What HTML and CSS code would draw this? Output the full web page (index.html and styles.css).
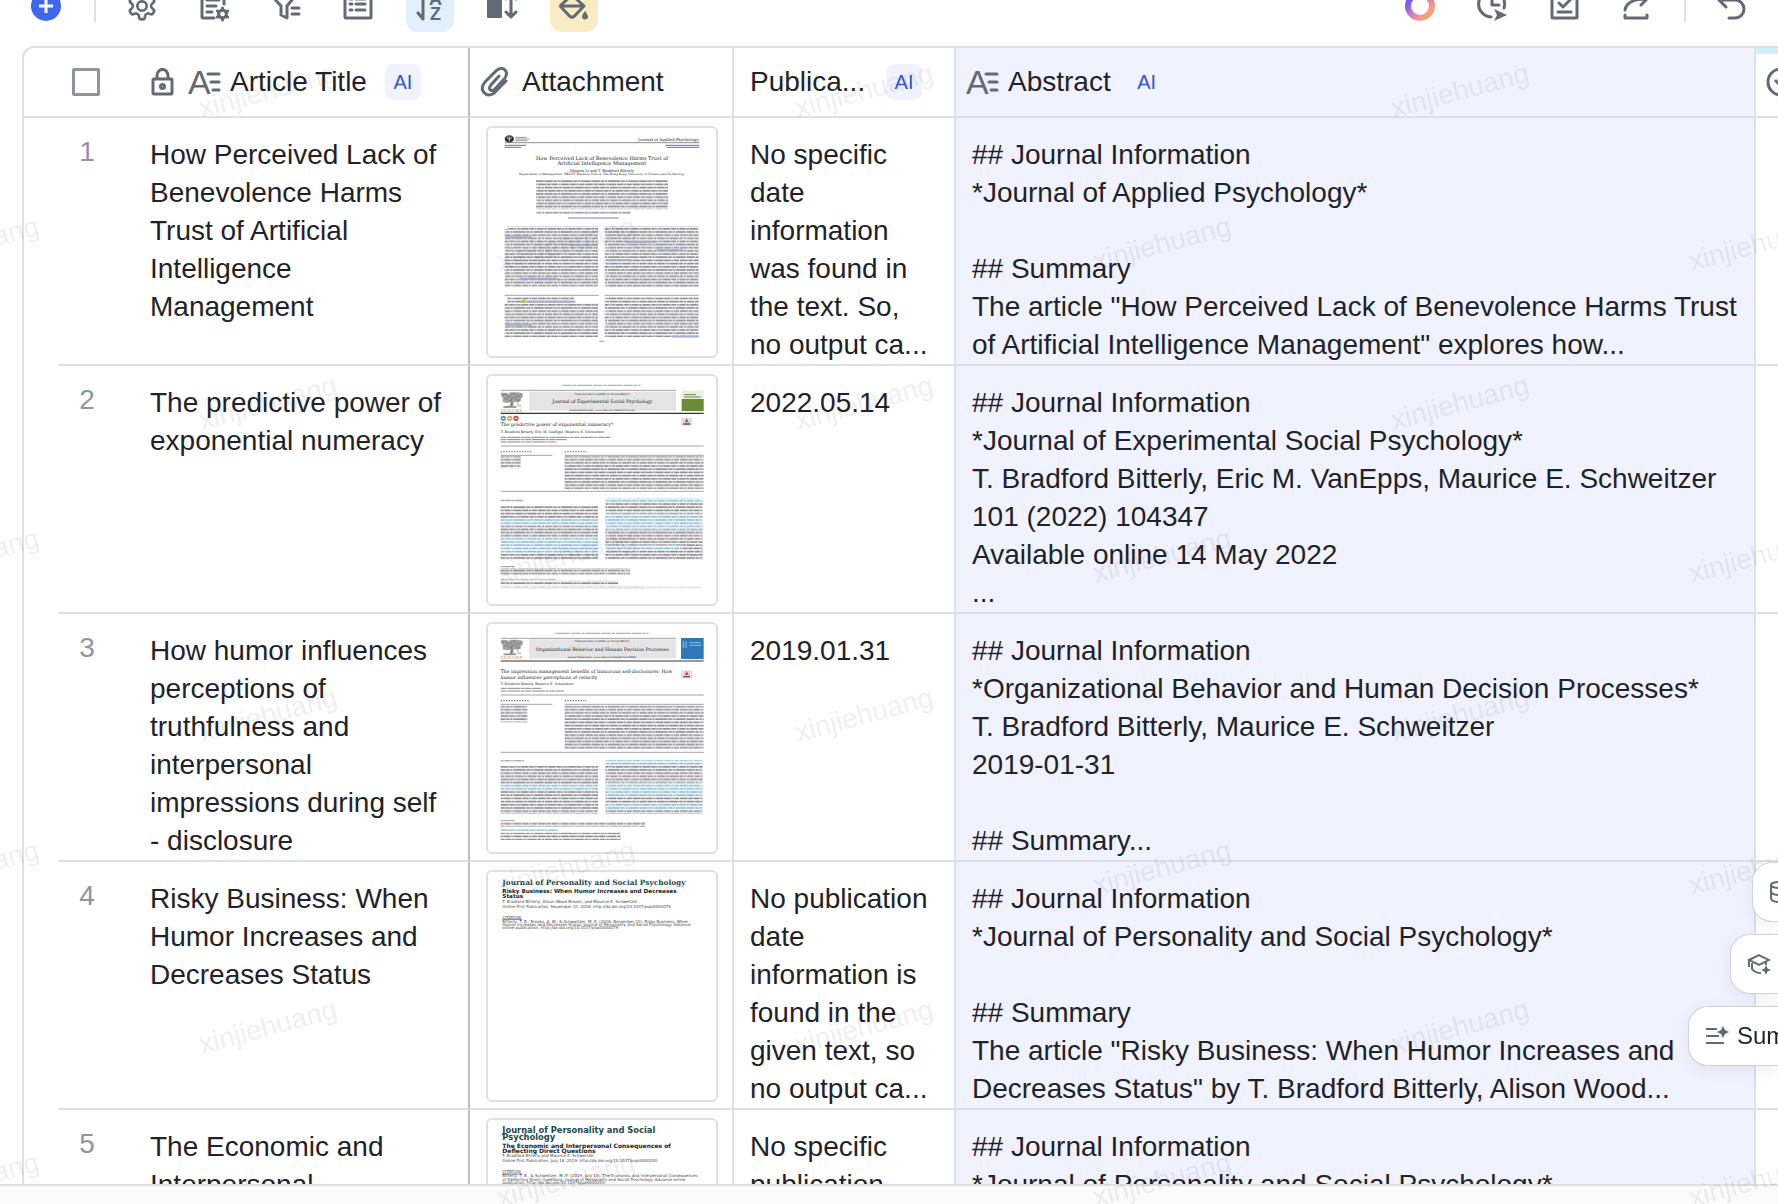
FILE: index.html
```html
<!DOCTYPE html>
<html lang="en">
<head>
<meta charset="utf-8">
<title>Article library</title>
<link rel="stylesheet" href="styles.css">
</head>
<body>
<svg class="defs" aria-hidden="true">
  <defs>
    <pattern id="copy" width="142" height="38" patternUnits="userSpaceOnUse">
      <g fill="none" stroke="#8e8e94" stroke-width="5">
        <path d="M0 5H142" stroke-dasharray="17 2 9 2 28 2 12 2 6 2 22 2"/>
        <path d="M0 14.500H142" stroke-dasharray="8 2 24 2 15 2 5 2 19 2"/>
        <path d="M0 24H142" stroke-dasharray="25 2 11 2 7 2 30 2"/>
        <path d="M0 33.500H142" stroke-dasharray="13 2 19 2 6 2 16 2 23 2"/>
      </g>
    </pattern>
    <pattern id="cite" width="142" height="38" patternUnits="userSpaceOnUse">
      <g fill="none" stroke="#8fbbd6" stroke-width="5">
        <path d="M0 5H142" stroke-dasharray="17 2 9 2 28 2 12 2 6 2 22 2"/>
        <path d="M0 14.500H142" stroke-dasharray="8 2 24 2 15 2 5 2 19 2"/>
        <path d="M0 24H142" stroke-dasharray="25 2 11 2 7 2 30 2"/>
        <path d="M0 33.500H142" stroke-dasharray="13 2 19 2 6 2 16 2 23 2"/>
      </g>
    </pattern>
    <symbol id="text-field" viewBox="0 0 34 28">
      <text x="0" y="26" font-family="Liberation Sans, Arial, sans-serif" font-size="34" fill="#646a73">A</text>
      <path d="M20 6H31M23 14H31M25 22H31" stroke="#646a73" stroke-width="3" stroke-linecap="round"/>
    </symbol>
    <symbol id="tree" viewBox="0 0 68 60">
      <path d="M1 2h18l4 4 6-5h22l15 3v12l-6 4v8l-12 3-8-2-2 13h9v6H8v-5h18l4-12-10 2-14-3V16L1 12Z" fill="#a2a2a2"/>
      <path d="M6 10q10-6 14 2t14-4q6-7 12 2t14-2M10 22q8-6 13 1t12-3 13 2 8-2M33 18v20M12 44h18l4-8M52 32v10h10" fill="none" stroke="#5d5d5d" stroke-width="2" stroke-dasharray="5 2"/>
      <text x="0" y="59" font-family="Liberation Serif, serif" font-size="14" fill="#e08a2c">ELSEVIER</text>
    </symbol>
    <linearGradient id="ring" x1="0" y1="0" x2="1" y2="1">
      <stop offset="0.200" stop-color="#7a5cf0"/>
      <stop offset="0.500" stop-color="#d77bc0"/>
      <stop offset="0.800" stop-color="#f5a079"/>
    </linearGradient>
  </defs>
</svg>

<header class="toolbar">
  <button class="tool" type="button" aria-label="Add record"><svg class="icon" viewBox="0 0 32 32"><circle cx="16" cy="16" r="15" fill="#3f66ee"/><path d="M16 9v14M9 16h14" stroke="#fff" stroke-width="3"/></svg></button>
  <span class="rule"></span>
  <button class="tool" type="button" aria-label="Settings"><svg class="icon line" viewBox="0 0 32 32"><g transform="scale(1.333)" stroke-width="2"><path d="M12.220 2h-.440a2 2 0 0 0-2 2v.180a2 2 0 0 1-1 1.730l-.430.250a2 2 0 0 1-2 0l-.150-.080a2 2 0 0 0-2.730.730l-.220.380a2 2 0 0 0 .730 2.730l.150.100a2 2 0 0 1 1 1.720v.510a2 2 0 0 1-1 1.740l-.150.090a2 2 0 0 0-.730 2.730l.220.380a2 2 0 0 0 2.730.730l.150-.080a2 2 0 0 1 2 0l.430.250a2 2 0 0 1 1 1.730V20a2 2 0 0 0 2 2h.440a2 2 0 0 0 2-2v-.180a2 2 0 0 1 1-1.730l.430-.250a2 2 0 0 1 2 0l.150.080a2 2 0 0 0 2.730-.730l.220-.390a2 2 0 0 0-.730-2.730l-.150-.080a2 2 0 0 1-1-1.740v-.500a2 2 0 0 1 1-1.740l.150-.090a2 2 0 0 0 .730-2.730l-.220-.380a2 2 0 0 0-2.730-.730l-.150.080a2 2 0 0 1-2 0l-.430-.250a2 2 0 0 1-1-1.730V4a2 2 0 0 0-2-2z"/><circle cx="12" cy="12" r="3.500"/></g></svg></button>
  <button class="tool" type="button" aria-label="Form"><svg class="icon line" viewBox="0 0 32 32"><path d="M16 28H5a1 1 0 0 1-1-1V4h22v10M9 10h12M9 16h9M9 22h5"/><circle cx="24.500" cy="24" r="4"/><path d="M24.500 18v2.500M24.500 27.500V30M19.300 21l2 1M27.700 26l2 1M19.300 27l2-1M27.700 22l2-1"/></svg></button>
  <button class="tool" type="button" aria-label="Filter"><svg class="icon line" viewBox="0 0 32 32"><path d="M3 5h23l-9 11v12l-6-3v-9L3 7ZM22 18h7M22 24h7"/></svg></button>
  <button class="tool" type="button" aria-label="Group"><svg class="icon line" viewBox="0 0 32 32"><rect x="3" y="3" width="26" height="25" rx="1"/><path d="M8 9h2M14 9h9M8 14h2M14 14h9M8 20h2M14 20h9"/></svg></button>
  <button class="tool tool-sort" type="button" aria-label="Sort"><svg class="icon line" viewBox="0 0 32 32"><path d="M9 3v26l-5-6"/><text class="az" x="15" y="15">A</text><text class="az" x="16" y="30">Z</text></svg></button>
  <button class="tool" type="button" aria-label="Row height"><svg class="icon line" viewBox="0 0 32 32"><rect x="1" y="4" width="15" height="24" rx="1" fill="#646a73" stroke="none"/><path d="M25 4v23M20 9l5-5 5 5M20 22l5 5 5-5"/></svg></button>
  <button class="tool tool-fill" type="button" aria-label="Fill colour"><svg class="icon line" viewBox="0 0 32 32"><path d="M14 5L26 16 16 26.500q-2 1.500-4 0L3 17q-1-1 0-2L14 5ZM3 16h22M14 5l-4-3"/><path d="M27 21q-3 4-3 5.500a3 3 0 0 0 6 0Q30 25 27 21Z" fill="#646a73" stroke="none"/></svg></button>
  <span class="spacer"></span>
  <button class="tool" type="button" aria-label="Assistant"><svg class="icon" viewBox="0 0 32 32"><circle cx="16" cy="16" r="12" fill="none" stroke="url(#ring)" stroke-width="6"/></svg></button>
  <button class="tool" type="button" aria-label="Automation"><svg class="icon line" viewBox="0 0 32 32"><path d="M15 27A13 13 0 1 1 28 18M16 7v8h7"/><path d="M18 19l13 6-13 6 3-6Z" fill="#646a73" stroke="none"/></svg></button>
  <button class="tool" type="button" aria-label="Tasks"><svg class="icon line" viewBox="0 0 32 32"><rect x="4" y="3" width="25" height="25" rx="1"/><path d="M11 13l4 4 8-8M10 22h13"/></svg></button>
  <button class="tool" type="button" aria-label="Share"><svg class="icon line" viewBox="0 0 32 32"><path d="M5 25v3h22v-3M5 20Q7 9 26 9M20 3l7 6-6 6"/></svg></button>
  <span class="rule"></span>
  <button class="tool" type="button" aria-label="Undo"><svg class="icon line" viewBox="0 0 32 32"><path d="M10 3L3 10l7 7M4 10h15a9 9 0 0 1 0 18h-6"/></svg></button>
</header>

<main class="sheet">
  <table class="grid">
    <colgroup><col class="w-index"><col class="w-title"><col class="w-file"><col class="w-date"><col><col class="w-next"></colgroup>
    <thead>
      <tr>
        <th class="index"><input class="check" type="checkbox" aria-label="Select all"></th>
        <th class="title" scope="col"><div class="head"><svg class="lock" viewBox="0 0 24 28" fill="none" stroke="#646a73" stroke-width="3"><rect x="3" y="11" width="19" height="15" rx="1"/><path d="M7 11V8a5 6 0 0 1 11 0v3"/><circle cx="12.500" cy="18.500" r="2"/></svg><svg class="field"><use href="#text-field"/></svg><span>Article Title</span><span class="ai">AI</span></div></th>
        <th class="file" scope="col"><div class="head head-icon"><svg class="clip" viewBox="0 0 28 30" fill="none" stroke="#646a73" stroke-width="3" stroke-linecap="round"><path d="M19 9L10.500 18.500q-2 3 0 4.500t4.500-1L25 11q3-5 0-8t-8 0L5 15q-5 6-1 10.500t9.500 1L26 14"/></svg><span>Attachment</span></div></th>
        <th class="date" scope="col"><div class="head"><span>Publica...</span><span class="ai">AI</span></div></th>
        <th class="abstract" scope="col"><div class="head head-icon"><svg class="field"><use href="#text-field"/></svg><span>Abstract</span><span class="ai">AI</span></div></th>
        <th class="next"><svg class="circle" viewBox="0 0 30 30" fill="none" stroke="#646a73" stroke-width="3"><circle cx="15" cy="15" r="13"/><path d="M9 13l6 6 6-6"/></svg></th>
      </tr>
    </thead>
    <tbody>
      <tr>
        <th class="index" scope="row">1</th>
        <td class="title">How Perceived Lack of
Benevolence Harms
Trust of Artificial
Intelligence
Management</td>
        <td class="file"><svg class="thumb" viewBox="54 54 684 684">
          <ellipse cx="118" cy="87" rx="14" ry="11" fill="#333"/><path d="M112 80q0 8 6 8t6-8M118 79v16" fill="none" stroke="#fff" stroke-width="2"/>
          <path d="M136 82h34M136 87h42M136 92h36" stroke="#999" stroke-width="3"/>
          <path d="M104 98H688" stroke="#555" stroke-width="2"/>
          <text class="serif" x="686" y="94" font-size="12" text-anchor="end">Journal of Applied Psychology</text>
          <path d="M104 106h64M104 112h50" stroke="#777" stroke-width="3"/><path d="M586 106h102M590 112h98" stroke="#6a6ab0" stroke-width="3"/>
          <g class="serif" text-anchor="middle"><text x="396" y="149" font-size="15">How Perceived Lack of Benevolence Harms Trust of</text><text x="396" y="165" font-size="15">Artificial Intelligence Management</text><text x="396" y="187" font-size="11">Mingyu Li and T. Bradford Bitterly</text><text x="396" y="196" font-size="9">Department of Management, HKUST Business School, The Hong Kong University of Science and Technology</text></g>
          <path fill="url(#copy)" d="M198 210H594V298H198ZM198 304H482V311H198ZM112 349H384V357H112ZM104 357H384V530H104ZM404 349H686V532H404ZM112 562H312V580H112ZM104 580H384V682H104ZM404 562H686V682H404Z"/>
          <path d="M294 324h152M106 381h80M300 405h80M470 396h90M560 420h80M410 450h70M170 575h146M106 645h80M606 680h78M150 506h110" stroke="#a3a9d6" stroke-width="5"/>
          <circle cx="162" cy="574" r="6" fill="#a6ce39"/>
          <path d="M104 556H386M404 556H686M388 694h16" stroke="#777" stroke-width="2"/>
        </svg></td>
        <td class="date">No specific
date
information
was found in
the text. So,
no output ca...</td>
        <td class="abstract">## Journal Information
*Journal of Applied Psychology*

## Summary
The article "How Perceived Lack of Benevolence Harms Trust
of Artificial Intelligence Management" explores how...</td>
        <td class="next"></td>
      </tr>
      <tr>
        <th class="index" scope="row">2</th>
        <td class="title">The predictive power of
exponential numeracy</td>
        <td class="file"><svg class="thumb" viewBox="54 48 684 684">
          <path d="M278 76H512" stroke="#8fbcd9" stroke-width="4" stroke-dasharray="28 3 10 3 44 3"/>
          <path d="M92 91H618" stroke="#777" stroke-width="2"/><rect x="177" y="95" width="441" height="57" fill="#e4e4e4"/>
          <use href="#tree" x="92" y="96" width="68" height="60"/>
          <g class="serif" text-anchor="middle"><text x="396" y="104" font-size="8">Contents lists available at ScienceDirect</text><text x="397" y="128" font-size="14">Journal of Experimental Social Psychology</text><text x="396" y="152" font-size="8">journal homepage: www.elsevier.com/locate/jesp</text></g>
          <rect x="635" y="91" width="66" height="62" fill="#e8efe2"/><rect x="635" y="117" width="66" height="36" fill="#6c8b37"/><path d="M642 104h36M642 111h50" stroke="#6c8b37" stroke-width="3"/>
          <path d="M92 160H701" stroke="#333" stroke-width="4"/>
          <circle cx="100" cy="175" r="8" fill="#4b9cc9"/><circle cx="119" cy="175" r="8" fill="#e5a23e"/><circle cx="138" cy="175" r="8" fill="#d64b3f"/><path d="M96 175h8M115 175h8M134 175h8" stroke="#fff" stroke-width="3"/>
          <rect x="634" y="173" width="32" height="24" fill="#ddd"/><path d="M644 187l6-12 6 12Z" fill="#d64b3f"/><path d="M640 192h20" stroke="#555" stroke-width="4"/>
          <g class="serif"><text x="92" y="198" font-size="14">The predictive power of exponential numeracy*</text><text x="92" y="219" font-size="10">T. Bradford Bitterly, Eric M. VanEpps, Maurice E. Schweitzer</text></g>
          <path d="M92 232H420M92 239H290M92 246H260" stroke="#888" stroke-width="3" stroke-dasharray="18 2 40 2 9 2"/>
          <path d="M92 258H701M92 286H247M284 286H701M92 394H701M92 620H134" stroke="#777" stroke-width="2"/>
          <path d="M92 275H186M284 275H350" stroke="#777" stroke-width="4" stroke-dasharray="4 4"/>
          <path fill="url(#copy)" d="M92 289h60v36H92ZM284 289H701V388H284ZM92 418h68v6H92ZM92 437H384V478H92ZM92 498H384V532H92ZM92 580H384V600H92ZM406 426H698V461H406ZM406 508H698V556H406ZM640 556H698V572H640ZM406 572H698V600H406ZM92 624H480V644H92ZM92 662H444V676H92ZM92 680H520V686H92Z"/>
          <path fill="url(#cite)" d="M92 478H384V498H92ZM92 532H384V580H92ZM406 415H698V426H406ZM406 461H698V508H406ZM406 556H640V572H406ZM92 654H258V660H92ZM520 680H698V686H520Z"/>
        </svg></td>
        <td class="date">2022.05.14</td>
        <td class="abstract">## Journal Information
*Journal of Experimental Social Psychology*
T. Bradford Bitterly, Eric M. VanEpps, Maurice E. Schweitzer
101 (2022) 104347
Available online 14 May 2022
...</td>
        <td class="next"></td>
      </tr>
      <tr>
        <th class="index" scope="row">3</th>
        <td class="title">How humor influences
perceptions of
truthfulness and
interpersonal
impressions during self
- disclosure</td>
        <td class="file"><svg class="thumb" viewBox="54 42 684 684">
          <path d="M256 70H536" stroke="#8fbcd9" stroke-width="4" stroke-dasharray="44 3 28 3 10 3"/>
          <path d="M92 85H618" stroke="#777" stroke-width="2"/><rect x="177" y="88" width="441" height="58" fill="#e4e4e4"/>
          <use href="#tree" x="92" y="88" width="68" height="60"/>
          <g class="serif" text-anchor="middle"><text x="396" y="96" font-size="8">Contents lists available at ScienceDirect</text><text x="397" y="122" font-size="14">Organizational Behavior and Human Decision Processes</text><text x="396" y="145" font-size="8">journal homepage: www.elsevier.com/locate/obhdp</text></g>
          <rect x="633" y="84" width="68" height="63" fill="#2f77b5"/><path d="M640 94v20M648 94v20M658 98h34M658 106h36" stroke="#7fb2dd" stroke-width="4"/>
          <path d="M92 153H701" stroke="#777" stroke-width="4"/>
          <rect x="634" y="181" width="32" height="25" fill="#ddd"/><path d="M644 195l6-12 6 12Z" fill="#d64b3f"/><path d="M640 200h20" stroke="#555" stroke-width="4"/>
          <g class="serif"><text x="92" y="190" font-size="14">The impression management benefits of humorous self-disclosures: How</text><text x="92" y="206" font-size="14">humor influences perceptions of veracity</text><text x="92" y="225" font-size="10">T. Bradford Bitterly, Maurice E. Schweitzer</text></g>
          <path d="M92 235H214M92 243H282" stroke="#888" stroke-width="3" stroke-dasharray="18 2 40 2 9 2"/>
          <path d="M92 255H701M92 283H247M284 283H701M92 427H701M92 632H134" stroke="#777" stroke-width="2"/>
          <path d="M92 272H180M284 272H350" stroke="#777" stroke-width="4" stroke-dasharray="4 4"/>
          <path fill="url(#copy)" d="M92 287h80v50H92ZM284 287H701V418H284ZM92 451h70v6H92ZM92 468H384V523H92ZM92 540H384V612H92ZM406 464H698V518H406ZM406 560H698V580H406ZM406 600H698V612H406ZM92 636H526V650H92ZM92 668H452V690H92Z"/>
          <path fill="url(#cite)" d="M92 523H384V540H92ZM406 451H698V464H406ZM406 518H698V560H406ZM406 580H698V600H406ZM92 658H264V664H92Z"/>
        </svg></td>
        <td class="date">2019.01.31</td>
        <td class="abstract">## Journal Information
*Organizational Behavior and Human Decision Processes*
T. Bradford Bitterly, Maurice E. Schweitzer
2019-01-31

## Summary...</td>
        <td class="next"></td>
      </tr>
      <tr>
        <th class="index" scope="row">4</th>
        <td class="title">Risky Business: When
Humor Increases and
Decreases Status</td>
        <td class="file"><svg class="thumb" viewBox="54 51 684 684">
          <text class="journal" x="97" y="90" font-size="22">Journal of Personality and Social Psychology</text>
          <g class="strong" font-size="17"><text x="97" y="115">Risky Business: When Humor Increases and Decreases</text><text x="97" y="130">Status</text></g>
          <g class="sans" font-size="12"><text x="97" y="144">T. Bradford Bitterly, Alison Wood Brooks, and Maurice E. Schweitzer</text><text x="97" y="158">Online First Publication, November 10, 2016. http://dx.doi.org/10.1037/pspi0000079</text><text x="97" y="191">CITATION</text><text x="97" y="203">Bitterly, T. B., Brooks, A. W., &amp; Schweitzer, M. E. (2016, November 10). Risky Business: When</text><text x="97" y="213">Humor Increases and Decreases Status. Journal of Personality and Social Psychology. Advance</text><text x="97" y="223">online publication. http://dx.doi.org/10.1037/pspi0000079</text></g>
          <path d="M97 193h59" stroke="#333" stroke-width="2"/>
        </svg></td>
        <td class="date">No publication
date
information is
found in the
given text, so
no output ca...</td>
        <td class="abstract">## Journal Information
*Journal of Personality and Social Psychology*

## Summary
The article "Risky Business: When Humor Increases and
Decreases Status" by T. Bradford Bitterly, Alison Wood...</td>
        <td class="next"></td>
      </tr>
      <tr>
        <th class="index" scope="row">5</th>
        <td class="title">The Economic and
Interpersonal
Consequences of
Deflecting Direct
Questions</td>
        <td class="file"><svg class="thumb" viewBox="54 795 684 684">
          <g class="journal-sans" font-size="25"><text x="97" y="834">Journal of Personality and Social</text><text x="97" y="854">Psychology</text></g>
          <g class="strong" font-size="18"><text x="97" y="879">The Economic and Interpersonal Consequences of</text><text x="97" y="894">Deflecting Direct Questions</text></g>
          <g class="sans" font-size="12"><text x="97" y="907">T. Bradford Bitterly and Maurice E. Schweitzer</text><text x="97" y="921">Online First Publication, July 18, 2019. http://dx.doi.org/10.1037/pspi0000200</text><text x="97" y="955">CITATION</text><text x="97" y="966">Bitterly, T. B., &amp; Schweitzer, M. E. (2019, July 18). The Economic and Interpersonal Consequences</text><text x="97" y="977">of Deflecting Direct Questions. Journal of Personality and Social Psychology. Advance online</text><text x="97" y="987">publication. http://dx.doi.org/10.1037/pspi0000200</text></g>
          <path d="M97 957h59" stroke="#333" stroke-width="2"/>
        </svg></td>
        <td class="date">No specific
publication
date</td>
        <td class="abstract">## Journal Information
*Journal of Personality and Social Psychology*</td>
        <td class="next"></td>
      </tr>
    </tbody>
  </table>
</main>
<footer class="status"></footer>

<div class="marks" aria-hidden="true">
  <span>xinjiehuang</span><span>xinjiehuang</span><span>xinjiehuang</span><span>xinjiehuang</span><span>xinjiehuang</span><span>xinjiehuang</span><span>xinjiehuang</span>
  <span>xinjiehuang</span><span>xinjiehuang</span><span>xinjiehuang</span><span>xinjiehuang</span><span>xinjiehuang</span><span>xinjiehuang</span><span>xinjiehuang</span>
  <span>xinjiehuang</span><span>xinjiehuang</span><span>xinjiehuang</span><span>xinjiehuang</span><span>xinjiehuang</span><span>xinjiehuang</span><span>xinjiehuang</span>
  <span>xinjiehuang</span><span>xinjiehuang</span><span>xinjiehuang</span><span>xinjiehuang</span><span>xinjiehuang</span><span>xinjiehuang</span><span>xinjiehuang</span>
</div>

<nav class="shortcuts" aria-label="Shortcuts">
  <button class="pill pill-data" type="button" aria-label="Data"><svg class="mini" viewBox="0 0 24 24"><path d="M2 5v13q0 4 9 4t9-4V5M2 11q0 4 9 4t9-4"/><ellipse cx="11" cy="5" rx="9" ry="3"/></svg></button>
  <button class="pill pill-study" type="button" aria-label="Study"><svg class="mini" viewBox="0 0 24 24"><path d="M2 8l10-5 10 5-10 5ZM2 8v7M5 11v6q3 4 9 4M19 10v3"/><path d="M19 13l1.500 3.500L24 18l-3.500 1.500L19 23l-1.500-3.500L14 18l3.500-1.500Z" fill="#646a73" stroke="none"/></svg></button>
  <button class="pill pill-summary" type="button"><svg class="mini" viewBox="0 0 24 24"><path d="M1 5h11M1 12h13M1 19h18"/><path d="M18 2l2 4 4 2-4 2-2 4-2-4-4-2 4-2Z" fill="#646a73" stroke="none"/></svg><span>Summary</span></button>
</nav>
</body>
</html>
```

FILE: styles.css
```css
* {
  box-sizing: border-box;
}

body {
  margin: 0;
  height: 100vh;
  display: flex;
  flex-direction: column;
  overflow: hidden;
  background: #fff;
  color: #1f2329;
  font: 28px/38px "Liberation Sans", Arial, sans-serif;
}

button {
  margin: 0;
  padding: 0;
  border: 0;
  background: none;
  color: inherit;
  font: inherit;
}

.defs {
  position: absolute;
  width: 0;
  height: 0;
}

/* Toolbar, scrolled partly out of view */
.toolbar {
  flex: none;
  display: flex;
  gap: 24px;
  height: 66px;
  margin-top: -20px;
  padding: 0 22px;
}

.tool {
  flex: none;
  display: flex;
  align-items: center;
  justify-content: center;
  width: 48px;
  height: 52px;
  border-radius: 12px;
}

.tool-sort {
  background: #e0f1fd;
}

.tool-fill {
  background: #f9ecc5;
}

.rule {
  width: 2px;
  height: 42px;
  margin-right: -2px;
  background: #dee0e3;
}

.spacer {
  flex: 1;
}

.icon {
  width: 32px;
  height: 32px;
}

.line {
  fill: none;
  stroke: #646a73;
  stroke-width: 3;
  stroke-linecap: round;
  stroke-linejoin: round;
}

.az {
  fill: #646a73;
  stroke: none;
  font: bold 18px "Liberation Sans", Arial, sans-serif;
}

/* Records */
.sheet {
  flex: 1;
  min-height: 0;
  margin-left: 22px;
  overflow: hidden;
  border-top: 2px solid #dee0e3;
  border-left: 2px solid #dee0e3;
  border-top-left-radius: 12px;
}

.grid {
  width: 100%;
  table-layout: fixed;
  border-collapse: separate;
  border-spacing: 0;
}

.w-index {
  width: 110px;
}

.w-title {
  width: 336px;
}

.w-file {
  width: 264px;
}

.w-date {
  width: 222px;
}

.w-next {
  width: 22px;
}

th,
td {
  padding: 0;
  border-right: 2px solid #dee0e3;
  border-bottom: 2px solid #dee0e3;
  font-weight: 400;
  text-align: left;
  vertical-align: top;
}

thead th {
  height: 70px;
  vertical-align: middle;
}

tbody td,
tbody th {
  height: 248px;
  white-space: pre-line;
}

tbody .title,
tbody .date,
tbody .abstract {
  padding: 18px 0 0 16px;
}

thead .index {
  padding-left: 48px;
  border-right: 0;
}

tbody .index {
  padding: 15px 4px 0 20px;
  border: 0;
  background: linear-gradient(#dee0e3, #dee0e3) 34px 100% / 100% 2px no-repeat;
  color: #8f959e;
  text-align: center;
}

.title {
  border-right-color: #bbbfc4;
}

.abstract {
  background: #f0f2ff;
}

.next {
  border-right: 0;
}

thead .next {
  padding-left: 10px;
  background: linear-gradient(#d1eefa, #d1eefa) 0 0 / 100% 6px no-repeat;
}

tbody .file {
  padding: 8px 0 0 16px;
}

.head {
  display: flex;
  align-items: center;
  padding-left: 16px;
}

.head-icon {
  padding-left: 10px;
}

.check {
  display: block;
  appearance: none;
  width: 28px;
  height: 28px;
  margin: 0;
  border: 3px solid #8f959e;
  border-radius: 2px;
}

.lock {
  width: 24px;
  height: 28px;
  margin-right: 14px;
}

.field {
  width: 34px;
  height: 28px;
  margin-right: 8px;
}

.clip {
  width: 28px;
  height: 30px;
  margin-right: 14px;
}

.circle {
  display: block;
  width: 30px;
  height: 30px;
}

.ai {
  width: 36px;
  height: 36px;
  margin-left: 18px;
  border-radius: 8px;
  background: #f0f2ff;
  color: #2f54d4;
  font-size: 20px;
  line-height: 36px;
  text-align: center;
}

.date .ai {
  margin: 0 32px 0 auto;
}

/* Page previews */
.thumb {
  display: block;
  width: 232px;
  height: 232px;
  border: 2px solid #dee0e3;
  border-radius: 6px;
  background: #fff;
}

.serif {
  fill: #222;
  font-family: "DejaVu Serif", serif;
}

.sans {
  fill: #444;
  font-family: "DejaVu Sans", sans-serif;
}

.strong {
  fill: #1c1c1c;
  font-family: "DejaVu Sans", sans-serif;
  font-weight: 700;
}

.journal {
  fill: #23474c;
  font-family: "DejaVu Serif", serif;
  font-weight: 700;
}

.journal-sans {
  fill: #23474c;
  font-family: "DejaVu Sans", sans-serif;
  font-weight: 700;
}

.status {
  flex: none;
  height: 20px;
  border-top: 2px solid #dee0e3;
  background: #fbfbfb;
}

/* Watermark laid over the whole page */
.marks {
  position: fixed;
  top: 75px;
  left: -179px;
  display: grid;
  grid-template-columns: repeat(7, 298px);
  grid-auto-rows: 153px 159px;
  color: rgba(31, 35, 41, 0.07);
  line-height: 32px;
  text-align: center;
  pointer-events: none;
}

.marks span {
  height: 32px;
  transform: rotate(-15deg);
}

.marks span:nth-child(7n + 1) {
  grid-column: 2;
}

.marks span:nth-child(7n + 2) {
  grid-column: 4;
}

.marks span:nth-child(7n + 3) {
  grid-column: 6;
}

.marks span:nth-child(7n + 4) {
  grid-column: 1;
}

.marks span:nth-child(7n + 5) {
  grid-column: 3;
}

.marks span:nth-child(7n + 6) {
  grid-column: 5;
}

.marks span:nth-child(7n + 7) {
  grid-column: 7;
}

/* Shortcuts docked to the right edge */
.shortcuts {
  position: fixed;
  right: 0;
  bottom: 138px;
  display: flex;
  flex-direction: column;
  align-items: flex-end;
  gap: 12px;
}

.pill {
  display: flex;
  align-items: center;
  gap: 8px;
  height: 60px;
  padding-left: 16px;
  overflow: hidden;
  border: 1px solid #d0d3d6;
  border-right: 0;
  border-radius: 20px 0 0 20px;
  background: #fff;
  box-shadow: 0 4px 16px rgba(31, 35, 41, 0.08);
  font-size: 24px;
}

.pill-data {
  width: 26px;
}

.pill-study {
  width: 48px;
}

.pill-summary {
  width: 90px;
}

.mini {
  flex: none;
  width: 24px;
  height: 24px;
  fill: none;
  stroke: #646a73;
  stroke-width: 2;
}
```
